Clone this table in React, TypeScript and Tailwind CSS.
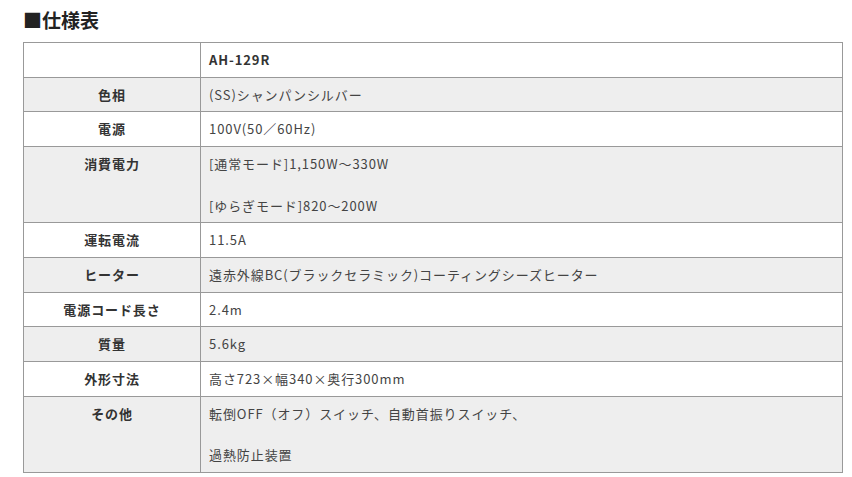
const rows: { label: string; value: string[]; gray: boolean }[] = [
  { label: "色相", value: ["(SS)シャンパンシルバー"], gray: true },
  { label: "電源", value: ["100V(50／60Hz)"], gray: false },
  {
    label: "消費電力",
    value: ["[通常モード]1,150W～330W", "", "[ゆらぎモード]820～200W"],
    gray: true,
  },
  { label: "運転電流", value: ["11.5A"], gray: false },
  {
    label: "ヒーター",
    value: ["遠赤外線BC(ブラックセラミック)コーティングシーズヒーター"],
    gray: true,
  },
  { label: "電源コード長さ", value: ["2.4m"], gray: false },
  { label: "質量", value: ["5.6kg"], gray: true },
  { label: "外形寸法", value: ["高さ723×幅340×奥行300mm"], gray: false },
  {
    label: "その他",
    value: ["転倒OFF（オフ）スイッチ、自動首振りスイッチ、", "", "過熱防止装置"],
    gray: true,
  },
];

export default function App() {
  return (
    <div
      className="bg-white text-[#333] pl-[23px] pr-[10px] pt-[8px]"
      style={{ fontFamily: '"Noto Sans CJK JP", "Noto Sans", sans-serif' }}
    >
      <h2 className="text-[19px] font-bold leading-[24px] text-[#222]">■仕様表</h2>

      <table className="mt-[10px] w-[820px] border-collapse text-[13px] leading-[20.7px] tracking-[0.07em]">
        <tbody>
          <tr className="bg-white">
            <th className="w-[177px] border border-[#999] pt-[7px] pb-[6px]"></th>
            <td className="border border-[#999] pt-[7px] pb-[6px] px-[8px] text-left font-bold">AH-129R</td>
          </tr>
          {rows.map((row) => (
            <tr key={row.label} className={row.gray ? "bg-[#eeeeee]" : "bg-white"}>
              <th className="border border-[#999] pt-[7px] pb-[6px] align-top text-center font-bold">
                {row.label}
              </th>
              <td className="border border-[#999] pt-[7px] pb-[6px] px-[8px] align-top text-[#444]">
                {row.value.map((line, i) => (
                  <div key={i}>{line || "\u00a0"}</div>
                ))}
              </td>
            </tr>
          ))}
        </tbody>
      </table>
    </div>
  );
}
